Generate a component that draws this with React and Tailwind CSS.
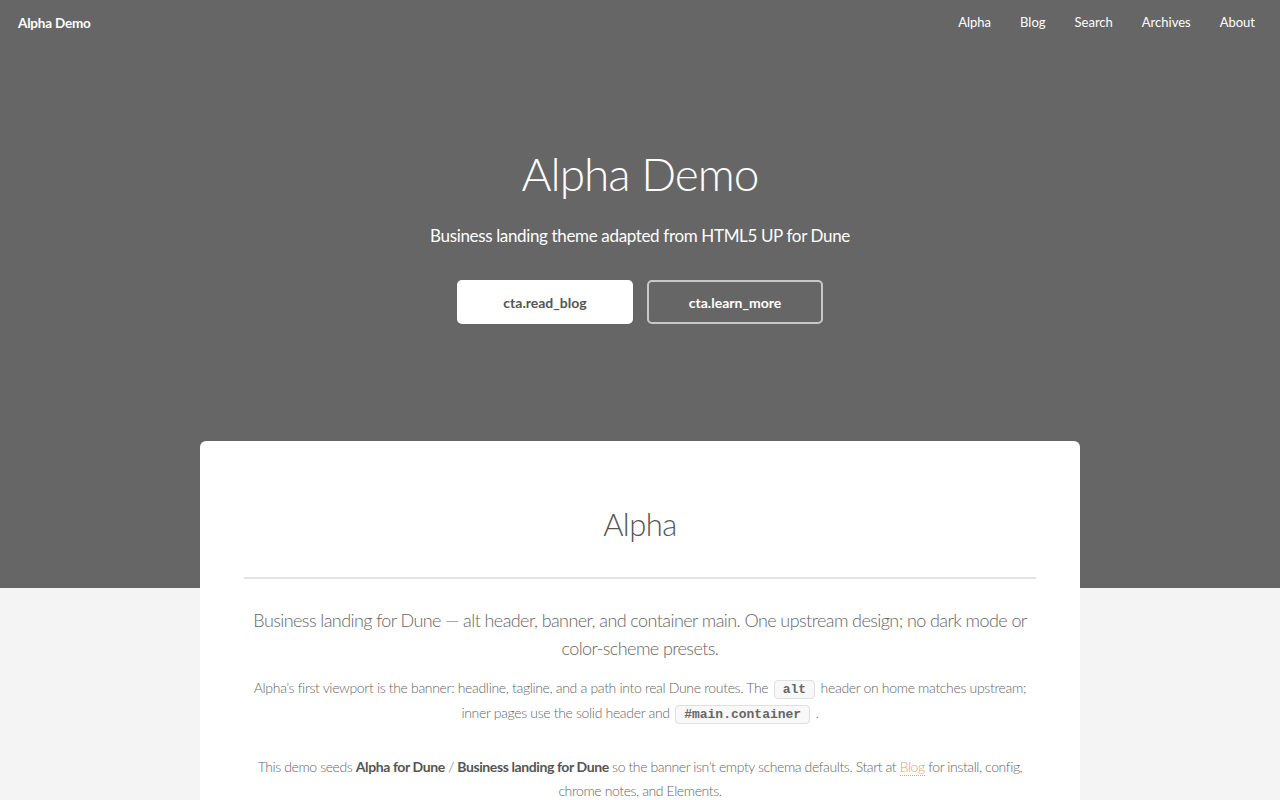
export default function App() {
  const font = { fontFamily: 'Lato, "Open Sans", sans-serif' }
  const mono = { fontFamily: '"Liberation Mono", monospace' }
  return (
    <div className="min-h-screen bg-[#f4f4f4] text-[#666]" style={font}>
      <header className="h-[46px] bg-[#666] flex items-center justify-between pl-[18px] pr-[25px] text-white text-[13px]">
        <a className="font-bold text-[13.5px] tracking-[-0.2px]">Alpha Demo</a>
        <nav className="flex items-center gap-[29px]">
          <a>Alpha</a>
          <a>Blog</a>
          <a>Search</a>
          <a>Archives</a>
          <a>About</a>
        </nav>
      </header>

      <section className="bg-[#666] text-white text-center pt-[99px] pb-[264px]">
        <h1 className="text-[46px] leading-[58px] font-light tracking-[-1px]">Alpha Demo</h1>
        <p className="mt-[19px] text-[17px] leading-[28px] tracking-[-0.35px]">Business landing theme adapted from HTML5 UP for Dune</p>
        <div className="mt-[30px] flex justify-center gap-[14px]">
          <a className="w-[176px] h-[44px] rounded-[5px] bg-white text-[#555] text-[14px] font-bold flex items-center justify-center">cta.read_blog</a>
          <a className="w-[176px] h-[44px] rounded-[5px] border-2 border-[#c8c8c8] text-white text-[14px] font-bold flex items-center justify-center">cta.learn_more</a>
        </div>
      </section>

      <main className="mx-auto w-[880px] -mt-[147px] bg-white rounded-t-[6px] px-[44px] pt-[63px] pb-10 text-center">
        <h2 className="text-[31px] leading-[40px] font-light text-[#555] tracking-[-0.5px]">Alpha</h2>
        <hr className="mt-[33px] border-0 h-[2px] bg-[#e4e4e4]" />
        <p className="mt-[27px] text-[18px] leading-[28px] font-light text-[#666] tracking-[-0.58px]">
          Business landing for Dune — alt header, banner, and container main. One upstream design; no dark mode or color-scheme presets.
        </p>
        <p className="mt-[13px] text-[14px] leading-[25px] font-light text-[#666] tracking-[-0.33px]">
          Alpha’s first viewport is the banner: headline, tagline, and a path into real Dune routes. The{' '}
          <code className="mx-[2px] px-[8px] py-[1px] leading-[16px] rounded-[4px] border border-[#e0e0e0] bg-[#f8f8f8] text-[13px] font-bold text-[#666] tracking-normal" style={mono}>alt</code>{' '}
          header on home matches upstream; inner pages use the solid header and{' '}
          <code className="mx-[2px] px-[8px] py-[1px] leading-[16px] rounded-[4px] border border-[#e0e0e0] bg-[#f8f8f8] text-[13px] font-bold text-[#666] tracking-normal" style={mono}>#main.container</code>{' '}
          .
        </p>
        <p className="mt-[30px] text-[14px] leading-[24px] font-light text-[#666] tracking-[-0.4px]">
          This demo seeds <strong className="font-bold text-[#555]">Alpha for Dune</strong> / <strong className="font-bold text-[#555]">Business landing for Dune</strong> so the banner isn’t empty schema defaults. Start at{' '}
          <a className="text-[#e89980] border-b border-dotted border-[#e89980]">Blog</a> for install, config, chrome notes, and Elements.
        </p>
      </main>
    </div>
  )
}
